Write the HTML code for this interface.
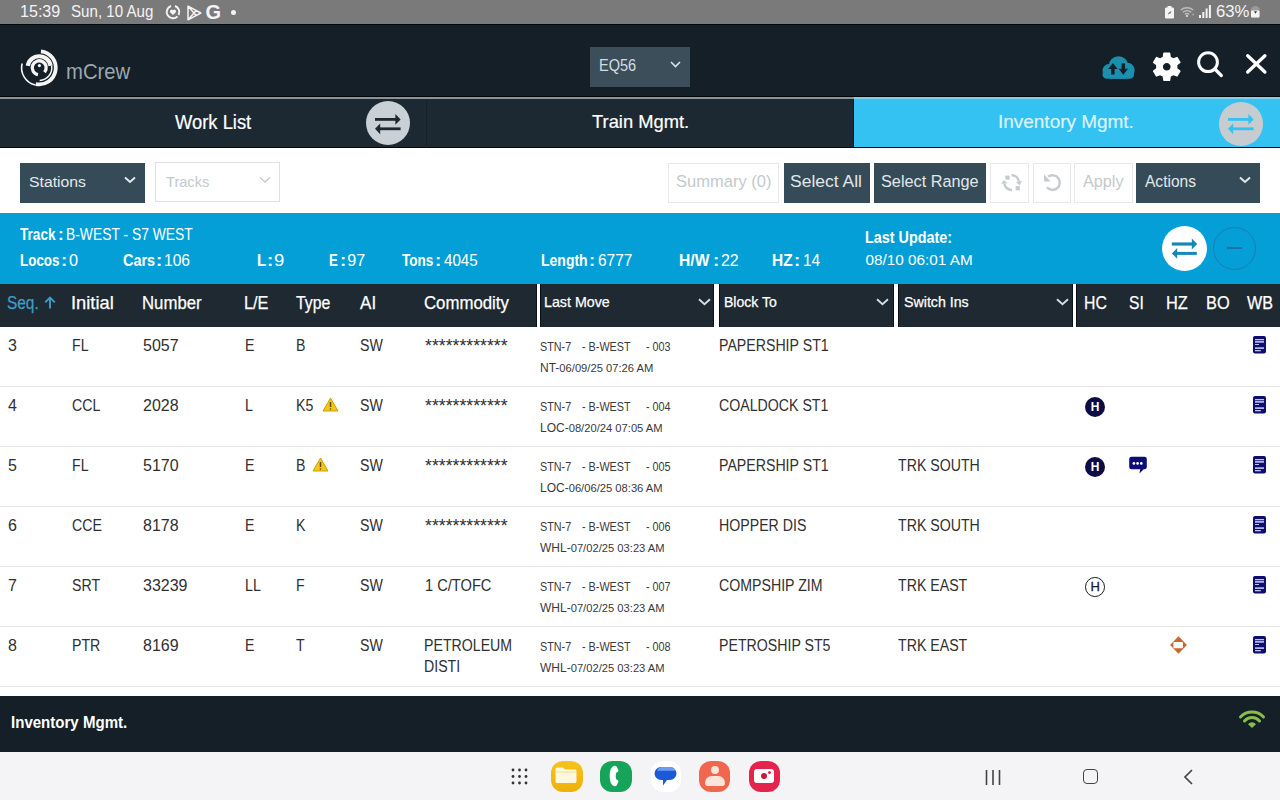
<!DOCTYPE html>
<html><head><meta charset="utf-8">
<style>
*{margin:0;padding:0;box-sizing:border-box}
html,body{width:1280px;height:800px;overflow:hidden;background:#fff;font-family:"Liberation Sans",sans-serif}
.a{position:absolute;white-space:nowrap}
svg{position:absolute;overflow:visible}
#status{left:0;top:0;width:1280px;height:24px;background:#7a7a7a;color:#f4f4f4;font-size:15.5px}
#appbar{left:0;top:24px;width:1280px;height:74px;background:#141f27;border-top:1px solid #06090c}
#tabs{left:0;top:97px;width:1280px;height:51px;background:#1d2932;border-top:2px solid #8c9297;border-bottom:1px solid #05090c;box-shadow:0 -1px #04070a}
.tab{top:0;height:48px;color:#fff;font-size:18px;line-height:48px;text-align:center;-webkit-text-stroke:0.2px currentColor}
.dd{height:40px;background:#364b58;color:#e3e9ec;font-size:15.5px;line-height:40px;padding-left:10px}
.ddw{height:40px;background:#fff;border:1px solid #dde1e4;color:#c0c6ca;font-size:15.5px;line-height:39px;padding-left:10px}
.btn{top:163px;height:40px;background:#364b58;color:#e1e7ea;font-size:15.5px;line-height:40px;text-align:center;letter-spacing:0.4px}
.btnw{top:163px;height:40px;background:#fff;border:1px solid #e6e8ea;color:#c3c9cd;font-size:15.5px;line-height:38px;text-align:center;letter-spacing:0.4px}
#band{left:0;top:213px;width:1280px;height:70.5px;background:#049fd6}
.bt{color:#fff}
.bt b{font-weight:bold}
#thead{left:0;top:283.5px;width:1280px;height:43.5px;background:#1e2931}
.th{top:-1px;color:#fff;font-size:16.5px;line-height:40px}
.sep{top:0;width:3px;height:43.5px;background:#fff;box-shadow:-1px 0 #0b1116,1px 0 #0b1116}
.row{left:0;width:1280px;height:61px;border-bottom:1.5px solid #e6e6e6}
.td{color:#303030;font-size:16px}
.lm{color:#3a3a3a;font-size:12px}
#footer{left:0;top:696px;width:1280px;height:56px;background:#151f27}
#nav{left:0;top:752px;width:1280px;height:48px;background:#f4f4f6}
</style></head><body>
<!-- status bar -->
<div id="status" class="a">
  <svg style="left:164.8px;top:4.3px" width="16" height="16" viewBox="0 0 16 16"><path d="M9.95 2.01A6.3 6.3 0 0 1 13.56 10.96 M12.53 12.38A6.3 6.3 0 1 1 6.05 2.01" fill="none" stroke="#f4f4f4" stroke-width="1.9"/><path d="M8 11l-2.7-2.6a1.6 1.6 0 0 1 2.7-2.1 1.6 1.6 0 0 1 2.7 2.1z" fill="#f4f4f4"/></svg>
  <svg style="left:186px;top:5px" width="16" height="16" viewBox="0 0 16 16"><path d="M2 1.2v13.6L14.8 8z M2 1.2L10 10.2 M2 14.8L10 5.8" fill="none" stroke="#f4f4f4" stroke-width="1.5" stroke-linejoin="round"/></svg>
  <div class="a" style="left:205.5px;top:1px;font-weight:bold;font-size:20px">G</div>
  <div class="a" style="left:231px;top:10px;width:5px;height:5px;border-radius:50%;background:#f4f4f4"></div>
  <!-- right -->
  <svg style="left:1165px;top:5.5px" width="9" height="12.5" viewBox="0 0 9 12.5"><rect x="0" y="1.5" width="9" height="11" rx="1.3" fill="#f4f4f4"/><rect x="2.5" y="0" width="4" height="2" fill="#f4f4f4"/><path d="M2.8 8.5c.5-2 2-3 3.6-3.2-.3 1.7-1.6 3-3.6 3.2z" fill="#7a7a7a"/></svg>
  <svg style="left:1180px;top:6px" width="15" height="11" viewBox="0 0 15 11"><path d="M0.8 4a9.5 9.5 0 0 1 12.4 0 M2.8 6.3a6.3 6.3 0 0 1 8.4 0 M4.9 8.4a3.2 3.2 0 0 1 4.2 0" fill="none" stroke="#bdbdbd" stroke-width="1.4"/><circle cx="7" cy="10" r="1.1" fill="#e0e0e0"/><circle cx="13.2" cy="8.4" r="1" fill="#a8a8a8"/></svg>
  <svg style="left:1199px;top:5px" width="12" height="13" viewBox="0 0 12 13"><rect x="0" y="10" width="2" height="3" fill="#f4f4f4"/><rect x="3.3" y="7" width="2" height="6" fill="#f4f4f4"/><rect x="6.6" y="3.5" width="2" height="9.5" fill="#f4f4f4"/><rect x="9.9" y="0" width="2" height="13" fill="#f4f4f4"/></svg>
  <svg style="left:1251px;top:6px" width="8.5" height="11.5" viewBox="0 0 8.5 11.5"><rect x="0" y="1.3" width="8.5" height="10.2" rx="1.2" fill="#9a9a9a"/><rect x="2.3" y="0" width="4" height="1.8" fill="#9a9a9a"/><rect x="0" y="4.5" width="8.5" height="7" rx="1" fill="#f4f4f4"/><path d="M3 5.2l1.5 2.5 1.5-2.5z" fill="#333"/></svg>
</div>
<!-- app bar -->
<div id="appbar" class="a">
  <svg style="left:20px;top:24px" width="38" height="40" viewBox="0 0 38 40"><g fill="none" stroke="#f5f5f5"><path d="M20.94 2.29A16.6 16.6 0 1 1 15.75 35.04" stroke-width="3.8"/><path d="M15.54 36.02A17.6 17.6 0 0 1 2.12 14.54" stroke-width="1.6"/><path d="M7.78 16.79A11.6 11.6 0 0 1 30.62 16.79" stroke-width="4.2"/><path d="M31.61 16.61A12.6 12.6 0 0 1 19.64 31.39" stroke-width="1.5"/><path d="M17.98 25.69A7.0 7.0 0 1 1 24.56 23.30" stroke-width="3.3"/></g><circle cx="19.4" cy="16.6" r="1.6" fill="#f5f5f5"/></svg>
  <div class="a" style="left:590px;top:22px;width:100px;height:40px;background:#3b4e5a"></div>
  <svg style="left:670px;top:36px" width="11" height="7" viewBox="0 0 11 7"><path d="M1 1l4.5 4.5L10 1" fill="none" stroke="#d8e2e7" stroke-width="1.6"/></svg>
  <!-- cloud -->
  <svg style="left:1101px;top:30.5px" width="34" height="23" viewBox="0 0 34 23"><g fill="#1b8fae"><circle cx="8" cy="14.5" r="6.5"/><circle cx="17.5" cy="10" r="9.8"/><circle cx="26.5" cy="14" r="7.2"/><rect x="5" y="12" width="24" height="10.8" rx="5"/><rect x="1.5" y="14" width="31.5" height="8.8" rx="4.4"/></g><g fill="#141f27"><path d="M10.2 18.5V13H7.2l4.7-6 4.7 6h-3V18.5z"/><path d="M20.6 7.2v5.5h-3l4.7 6 4.7-6h-3V7.2z"/></g></svg>
  <!-- gear -->
  <svg style="left:1149px;top:24px" width="35.5" height="35.5" viewBox="0 0 24 24"><path fill="#fff" d="M19.14 12.94c.04-.3.06-.61.06-.94 0-.32-.02-.64-.07-.94l2.03-1.58a.49.49 0 0 0 .12-.61l-1.92-3.32a.488.488 0 0 0-.59-.22l-2.39.96c-.5-.38-1.030-.7-1.62-.94l-.36-2.54a.484.484 0 0 0-.48-.41h-3.84c-.24 0-.43.17-.47.41l-.36 2.54c-.59.24-1.13.57-1.62.94l-2.39-.96c-.22-.08-.47 0-.59.22L2.74 8.87c-.12.21-.08.47.12.61l2.03 1.58c-.05.3-.09.63-.09.94s.02.64.07.94l-2.03 1.58a.49.49 0 0 0-.12.61l1.92 3.32c.12.22.37.29.59.22l2.39-.96c.5.38 1.03.7 1.62.94l.36 2.54c.05.24.24.41.48.41h3.84c.24 0 .44-.17.47-.41l.36-2.54c.59-.24 1.13-.56 1.62-.94l2.39.96c.22.08.47 0 .59-.22l1.920-3.32c.12-.22.07-.47-.12-.61l-2.01-1.58zM12 14.6c-1.43 0-2.6-1.17-2.6-2.6s1.17-2.6 2.6-2.6 2.6 1.17 2.6 2.6-1.17 2.6-2.6 2.6z"/></svg>
  <!-- search -->
  <svg style="left:1196px;top:26px" width="28" height="27" viewBox="0 0 28 27"><circle cx="12" cy="11.2" r="9.4" fill="none" stroke="#fff" stroke-width="3"/><path d="M18.8 18l6.5 6.5" stroke="#fff" stroke-width="3.2" stroke-linecap="round"/></svg>
  <!-- close -->
  <svg style="left:1246px;top:29px" width="21" height="20" viewBox="0 0 21 20"><path d="M1.7 1.7l17.2 16.3 M18.9 1.7L1.7 18" stroke="#fff" stroke-width="3.3" stroke-linecap="round"/></svg>
</div>
<!-- tabs -->
<div id="tabs" class="a">
  
  <div class="a" style="left:426px;top:0;width:1px;height:49px;background:#182028"></div>
  <div class="a" style="left:366px;top:2.4px;width:44px;height:44px;border-radius:50%;background:#c9d1d6"></div>
  <svg style="left:374px;top:15px" width="28" height="22" viewBox="0 0 28 22"><path d="M1 5.4h22" stroke="#1e2831" stroke-width="2.8"/><path d="M21.4 0l5.2 5.4-5.2 5.4z" fill="#1e2831"/><path d="M26.6 14.8H5" stroke="#1e2831" stroke-width="2.8"/><path d="M6.2 9.4L1 14.8l5.2 5.4z" fill="#1e2831"/></svg>
  
  <div class="a" style="left:853.5px;top:-2px;width:426.5px;height:2px;background:#84cfe9"></div>
  <div class="a" style="left:852.5px;top:0;width:1px;height:48px;background:#0c1820"></div>
  <div class="a tab" style="left:853.5px;width:426.5px;background:#33c2f1"></div>
  <div class="a" style="left:1219px;top:3px;width:43.5px;height:43.5px;border-radius:50%;background:#c6ccd0"></div>
  <svg style="left:1227px;top:15px" width="28" height="22" viewBox="0 0 28 22"><path d="M1 5.4h22" stroke="#33c2f1" stroke-width="2.8"/><path d="M21.4 0l5.2 5.4-5.2 5.4z" fill="#33c2f1"/><path d="M26.6 14.8H5" stroke="#33c2f1" stroke-width="2.8"/><path d="M6.2 9.4L1 14.8l5.2 5.4z" fill="#33c2f1"/></svg>
</div>
<!-- toolbar -->
<div class="a dd" style="left:20px;top:163px;width:125px"></div>
<svg style="left:124px;top:176px" width="12" height="8" viewBox="0 0 12 8"><path d="M1 1.5l5 4.5 5-4.5" fill="none" stroke="#e3e9ec" stroke-width="2"/></svg>
<div class="a ddw" style="left:155px;top:162px;width:125px"></div>
<svg style="left:259px;top:176px" width="12" height="8" viewBox="0 0 12 8"><path d="M1 1.5l5 4.5 5-4.5" fill="none" stroke="#c6ccd0" stroke-width="1.4"/></svg>
<div class="a btnw" style="left:668px;width:111px"></div>
<div class="a btn" style="left:784px;width:86px"></div>
<div class="a btn" style="left:874px;width:112px"></div>
<div class="a btnw" style="left:990px;width:39px"></div>
<svg style="left:1001px;top:172px" width="22" height="22" viewBox="0 0 22 22"><g fill="none" stroke="#c5cbcf" stroke-width="2.4"><path d="M10.44 3.20A7.4 7.4 0 0 1 18.03 9.57"/><path d="M10.96 18.00A7.4 7.4 0 0 1 3.37 11.63"/></g><path d="M21.24 9.12L18.53 13.14L14.82 10.02z M0.16 12.08L2.87 8.06L6.58 11.18z" fill="#c5cbcf"/><rect x="4.3" y="3.6" width="4.3" height="4" fill="#c5cbcf"/><rect x="14.6" y="14.1" width="4.3" height="4.2" fill="#c5cbcf"/></svg>
<div class="a btnw" style="left:1033px;width:38px"></div>
<svg style="left:1042px;top:172px" width="22" height="22" viewBox="0 0 22 22"><path d="M4.91 15.29A7.3 7.3 0 1 0 6.31 4.62" fill="none" stroke="#c5cbcf" stroke-width="2.5"/><path d="M2 2.6v6.8h6.6z" fill="#c5cbcf"/></svg>
<div class="a btnw" style="left:1074px;width:59px"></div>
<div class="a btn" style="left:1136px;width:124px;text-align:left;padding-left:9px"></div>
<svg style="left:1239px;top:176px" width="12" height="8" viewBox="0 0 12 8"><path d="M1 1.5l5 4.5 5-4.5" fill="none" stroke="#e3e9ec" stroke-width="2"/></svg>
<!-- band -->
<div id="band" class="a">
  <div class="a" style="left:1162px;top:13px;width:45px;height:45px;border-radius:50%;background:#fff"></div>
  <svg style="left:1170px;top:23px" width="29" height="24" viewBox="0 0 29 24"><path d="M1.8 8h21" stroke="#1787b8" stroke-width="3.2"/><path d="M21.8 2.6l5.4 5.4-5.4 5.4z" fill="#1787b8"/><path d="M26.8 17.4H6" stroke="#1787b8" stroke-width="3"/><path d="M7.2 12L1.8 17.4l5.4 5.4z" fill="#1787b8"/></svg>
  <div class="a" style="left:1213px;top:14px;width:43px;height:43px;border-radius:50%;border:1.2px solid #1a7db8"></div>
  <div class="a" style="left:1227px;top:34.2px;width:14.7px;height:2.2px;background:#1673a8"></div>
</div>
<div class="bt">
  <div class="a" style="left:20.36px;top:226.70px;font-size:15.71px;line-height:15.71px;font-weight:bold;transform:scaleX(0.866);transform-origin:0 0;">Track</div>
  <div class="a" style="left:57.87px;top:226.71px;font-size:15.70px;line-height:15.70px;font-weight:bold;transform:scaleX(1.092);transform-origin:0 0;">:</div>
  <div class="a" style="left:65.79px;top:226.70px;font-size:15.71px;line-height:15.71px;transform:scaleX(0.882);transform-origin:0 0;">B-WEST - S7 WEST</div>
  <div class="a" style="left:19.73px;top:251.84px;font-size:16.14px;line-height:16.14px;font-weight:bold;transform:scaleX(0.832);transform-origin:0 0;">Locos</div>
  <div class="a" style="left:61.04px;top:251.62px;font-size:16.40px;line-height:16.40px;font-weight:bold;transform:scaleX(1.132);transform-origin:0 0;">:</div>
  <div class="a" style="left:69.05px;top:251.84px;font-size:16.14px;line-height:16.14px;transform:scaleX(1.007);transform-origin:0 0;">0</div>
  <div class="a" style="left:122.52px;top:251.84px;font-size:16.14px;line-height:16.14px;font-weight:bold;transform:scaleX(0.895);transform-origin:0 0;">Cars</div>
  <div class="a" style="left:155.74px;top:251.62px;font-size:16.40px;line-height:16.40px;font-weight:bold;transform:scaleX(1.132);transform-origin:0 0;">:</div>
  <div class="a" style="left:164.13px;top:251.84px;font-size:16.14px;line-height:16.14px;transform:scaleX(0.967);transform-origin:0 0;">106</div>
  <div class="a" style="left:256.52px;top:251.84px;font-size:16.14px;line-height:16.14px;font-weight:bold;transform:scaleX(0.938);transform-origin:0 0;">L</div>
  <div class="a" style="left:266.64px;top:251.62px;font-size:16.40px;line-height:16.40px;font-weight:bold;transform:scaleX(1.132);transform-origin:0 0;">:</div>
  <div class="a" style="left:273.87px;top:251.84px;font-size:16.14px;line-height:16.14px;transform:scaleX(1.146);transform-origin:0 0;">9</div>
  <div class="a" style="left:328.84px;top:251.84px;font-size:16.14px;line-height:16.14px;font-weight:bold;transform:scaleX(0.822);transform-origin:0 0;">E</div>
  <div class="a" style="left:340.14px;top:251.62px;font-size:16.40px;line-height:16.40px;font-weight:bold;transform:scaleX(1.132);transform-origin:0 0;">:</div>
  <div class="a" style="left:347.37px;top:251.84px;font-size:16.14px;line-height:16.14px;">97</div>
  <div class="a" style="left:401.86px;top:251.84px;font-size:16.14px;line-height:16.14px;font-weight:bold;transform:scaleX(0.842);transform-origin:0 0;">Tons</div>
  <div class="a" style="left:435.14px;top:251.62px;font-size:16.40px;line-height:16.40px;font-weight:bold;transform:scaleX(1.132);transform-origin:0 0;">:</div>
  <div class="a" style="left:443.90px;top:251.84px;font-size:16.14px;line-height:16.14px;transform:scaleX(0.939);transform-origin:0 0;">4045</div>
  <div class="a" style="left:540.79px;top:251.84px;font-size:16.14px;line-height:16.14px;font-weight:bold;transform:scaleX(0.868);transform-origin:0 0;">Length</div>
  <div class="a" style="left:589.14px;top:251.62px;font-size:16.40px;line-height:16.40px;font-weight:bold;transform:scaleX(1.132);transform-origin:0 0;">:</div>
  <div class="a" style="left:597.63px;top:251.84px;font-size:16.14px;line-height:16.14px;transform:scaleX(0.958);transform-origin:0 0;">6777</div>
  <div class="a" style="left:679.28px;top:251.84px;font-size:16.14px;line-height:16.14px;font-weight:bold;transform:scaleX(0.969);transform-origin:0 0;">H/W</div>
  <div class="a" style="left:712.64px;top:251.62px;font-size:16.40px;line-height:16.40px;font-weight:bold;transform:scaleX(1.132);transform-origin:0 0;">:</div>
  <div class="a" style="left:720.60px;top:251.84px;font-size:16.14px;line-height:16.14px;transform:scaleX(0.987);transform-origin:0 0;">22</div>
  <div class="a" style="left:772.39px;top:251.84px;font-size:16.14px;line-height:16.14px;font-weight:bold;transform:scaleX(0.959);transform-origin:0 0;">HZ</div>
  <div class="a" style="left:794.24px;top:251.62px;font-size:16.40px;line-height:16.40px;font-weight:bold;transform:scaleX(1.132);transform-origin:0 0;">:</div>
  <div class="a" style="left:802.64px;top:251.84px;font-size:16.14px;line-height:16.14px;transform:scaleX(0.955);transform-origin:0 0;">14</div>
  <div class="a" style="left:865.26px;top:229.09px;font-size:16.43px;line-height:16.43px;font-weight:bold;transform:scaleX(0.876);transform-origin:0 0;">Last Update:</div>
  <div class="a" style="left:865.59px;top:252.36px;font-size:15.29px;line-height:15.29px;">08/10 06:01 AM</div>
</div>
<!-- table header -->
<div id="thead" class="a">
  <div class="a sep" style="left:537px;width:3px"></div>
  <div class="a sep" style="left:714.3px;width:4.4px"></div>
  <div class="a sep" style="left:893.7px;width:4.4px"></div>
  <div class="a sep" style="left:1072.8px;width:3.4px"></div>
  <svg style="left:43.5px;top:12.5px" width="12" height="13" viewBox="0 0 12 13"><path d="M6 12.5V1.5 M1.2 6.3L6 1.5l4.8 4.8" fill="none" stroke="#3f9dc9" stroke-width="1.9"/></svg>
  <svg style="left:698px;top:14px" width="13" height="8" viewBox="0 0 13 8"><path d="M1 1.2l5.5 5 5.5-5" fill="none" stroke="#d5dde1" stroke-width="1.9"/></svg>
  <svg style="left:876px;top:14px" width="13" height="8" viewBox="0 0 13 8"><path d="M1 1.2l5.5 5 5.5-5" fill="none" stroke="#d5dde1" stroke-width="1.9"/></svg>
  <svg style="left:1056px;top:14px" width="13" height="8" viewBox="0 0 13 8"><path d="M1 1.2l5.5 5 5.5-5" fill="none" stroke="#d5dde1" stroke-width="1.9"/></svg>
</div>
  <div class="a" style="left:6.71px;top:293.76px;font-size:18.00px;line-height:18.00px;transform:scaleX(0.856);transform-origin:0 0;color:#3f9dc9;-webkit-text-stroke:0.25px currentColor;">Seq.</div>
  <div class="a" style="left:70.95px;top:293.76px;font-size:18.00px;line-height:18.00px;transform:scaleX(1.019);transform-origin:0 0;color:#fff;-webkit-text-stroke:0.25px currentColor;">Initial</div>
  <div class="a" style="left:142.16px;top:293.76px;font-size:18.00px;line-height:18.00px;transform:scaleX(0.931);transform-origin:0 0;color:#fff;-webkit-text-stroke:0.25px currentColor;">Number</div>
  <div class="a" style="left:243.70px;top:293.76px;font-size:18.00px;line-height:18.00px;transform:scaleX(0.906);transform-origin:0 0;color:#fff;-webkit-text-stroke:0.25px currentColor;">L/E</div>
  <div class="a" style="left:296.28px;top:293.76px;font-size:18.00px;line-height:18.00px;transform:scaleX(0.878);transform-origin:0 0;color:#fff;-webkit-text-stroke:0.25px currentColor;">Type</div>
  <div class="a" style="left:360.30px;top:293.76px;font-size:18.00px;line-height:18.00px;transform:scaleX(0.948);transform-origin:0 0;color:#fff;-webkit-text-stroke:0.25px currentColor;">AI</div>
  <div class="a" style="left:423.66px;top:293.76px;font-size:18.00px;line-height:18.00px;transform:scaleX(0.932);transform-origin:0 0;color:#fff;-webkit-text-stroke:0.25px currentColor;">Commodity</div>
  <div class="a" style="left:1083.84px;top:293.76px;font-size:18.00px;line-height:18.00px;transform:scaleX(0.876);transform-origin:0 0;color:#fff;-webkit-text-stroke:0.25px currentColor;">HC</div>
  <div class="a" style="left:1129.20px;top:293.76px;font-size:18.00px;line-height:18.00px;transform:scaleX(0.870);transform-origin:0 0;color:#fff;-webkit-text-stroke:0.25px currentColor;">SI</div>
  <div class="a" style="left:1166.29px;top:293.76px;font-size:18.00px;line-height:18.00px;transform:scaleX(0.911);transform-origin:0 0;color:#fff;-webkit-text-stroke:0.25px currentColor;">HZ</div>
  <div class="a" style="left:1206.19px;top:293.76px;font-size:18.00px;line-height:18.00px;transform:scaleX(0.908);transform-origin:0 0;color:#fff;-webkit-text-stroke:0.25px currentColor;">BO</div>
  <div class="a" style="left:1246.82px;top:293.76px;font-size:18.00px;line-height:18.00px;transform:scaleX(0.897);transform-origin:0 0;color:#fff;-webkit-text-stroke:0.25px currentColor;">WB</div>
  <div class="a" style="left:544.46px;top:295.44px;font-size:14.71px;line-height:14.71px;transform:scaleX(0.970);transform-origin:0 0;color:#fff;-webkit-text-stroke:0.25px currentColor;">Last Move</div>
  <div class="a" style="left:723.58px;top:295.44px;font-size:14.71px;line-height:14.71px;transform:scaleX(0.954);transform-origin:0 0;color:#fff;-webkit-text-stroke:0.25px currentColor;">Block To</div>
  <div class="a" style="left:903.76px;top:295.44px;font-size:14.71px;line-height:14.71px;transform:scaleX(0.966);transform-origin:0 0;color:#fff;-webkit-text-stroke:0.25px currentColor;">Switch Ins</div>
<div class="a row" style="top:326px">
  <div class="a td" style="left:8px;top:11px;">3</div>
  <div class="a td" style="left:72px;top:11px;transform:scaleX(0.885);transform-origin:0 0;">FL</div>
  <div class="a td" style="left:143px;top:11px;">5057</div>
  <div class="a td" style="left:245px;top:11px;transform:scaleX(0.885);transform-origin:0 0;">E</div>
  <div class="a td" style="left:296px;top:11px;transform:scaleX(0.885);transform-origin:0 0;">B</div>
  <div class="a td" style="left:360px;top:11px;transform:scaleX(0.885);transform-origin:0 0;">SW</div>
  <div class="a td" style="left:425px;top:10px;font-size:17.7px">************</div>
  <div class="a lm" style="left:540px;top:14px;transform:scaleX(0.9);transform-origin:0 0">STN-7</div>
  <div class="a lm" style="left:582px;top:14px;transform:scaleX(0.9);transform-origin:0 0">- B-WEST</div>
  <div class="a lm" style="left:646px;top:14px;transform:scaleX(0.9);transform-origin:0 0">- 003</div>
  <div class="a lm" style="left:540px;top:35px">NT-<span style="font-size:11.2px">06/09/25 07:26 AM</span></div>
  <div class="a td" style="left:719px;top:11px;transform:scaleX(0.885);transform-origin:0 0;">PAPERSHIP ST1</div>
  <svg style="left:1253px;top:10px" width="14" height="18" viewBox="0 0 14 18"><rect x="0" y="0" width="13" height="17.5" rx="2" fill="#0e0e6e"/><rect x="2" y="3" width="9" height="1.3" fill="#c4c4f4"/><rect x="2" y="5.1" width="9" height="1.6" fill="#c4c4f4"/><rect x="2" y="8" width="4" height="1" fill="#c4c4f4"/><rect x="2" y="11.3" width="9" height="1.6" fill="#c4c4f4"/><rect x="2" y="14" width="5.8" height="1.3" fill="#c4c4f4"/></svg>
</div>
<div class="a row" style="top:386px">
  <div class="a td" style="left:8px;top:11px;">4</div>
  <div class="a td" style="left:72px;top:11px;transform:scaleX(0.885);transform-origin:0 0;">CCL</div>
  <div class="a td" style="left:143px;top:11px;">2028</div>
  <div class="a td" style="left:245px;top:11px;transform:scaleX(0.885);transform-origin:0 0;">L</div>
  <div class="a td" style="left:296px;top:11px;transform:scaleX(0.885);transform-origin:0 0;">K5</div>
  <svg style="left:322px;top:11px" width="17" height="15" viewBox="0 0 17 15"><path d="M8.5 1L16 14H1z" fill="#f5c518" stroke="#c9a010" stroke-width="1" stroke-linejoin="round"/><path d="M8.5 5v5" stroke="#5a4a00" stroke-width="1.5"/><circle cx="8.5" cy="12" r="0.8" fill="#5a4a00"/></svg>
  <div class="a td" style="left:360px;top:11px;transform:scaleX(0.885);transform-origin:0 0;">SW</div>
  <div class="a td" style="left:425px;top:10px;font-size:17.7px">************</div>
  <div class="a lm" style="left:540px;top:14px;transform:scaleX(0.9);transform-origin:0 0">STN-7</div>
  <div class="a lm" style="left:582px;top:14px;transform:scaleX(0.9);transform-origin:0 0">- B-WEST</div>
  <div class="a lm" style="left:646px;top:14px;transform:scaleX(0.9);transform-origin:0 0">- 004</div>
  <div class="a lm" style="left:540px;top:35px">LOC-<span style="font-size:11.2px">08/20/24 07:05 AM</span></div>
  <div class="a td" style="left:719px;top:11px;transform:scaleX(0.885);transform-origin:0 0;">COALDOCK ST1</div>
  <div class="a" style="left:1085px;top:10.7px;width:20px;height:20px;border-radius:50%;background:#0d0d45;color:#fff;font-weight:bold;font-size:12px;line-height:20px;text-align:center">H</div>
  <svg style="left:1253px;top:10px" width="14" height="18" viewBox="0 0 14 18"><rect x="0" y="0" width="13" height="17.5" rx="2" fill="#0e0e6e"/><rect x="2" y="3" width="9" height="1.3" fill="#c4c4f4"/><rect x="2" y="5.1" width="9" height="1.6" fill="#c4c4f4"/><rect x="2" y="8" width="4" height="1" fill="#c4c4f4"/><rect x="2" y="11.3" width="9" height="1.6" fill="#c4c4f4"/><rect x="2" y="14" width="5.8" height="1.3" fill="#c4c4f4"/></svg>
</div>
<div class="a row" style="top:446px">
  <div class="a td" style="left:8px;top:11px;">5</div>
  <div class="a td" style="left:72px;top:11px;transform:scaleX(0.885);transform-origin:0 0;">FL</div>
  <div class="a td" style="left:143px;top:11px;">5170</div>
  <div class="a td" style="left:245px;top:11px;transform:scaleX(0.885);transform-origin:0 0;">E</div>
  <div class="a td" style="left:296px;top:11px;transform:scaleX(0.885);transform-origin:0 0;">B</div>
  <svg style="left:312px;top:11px" width="17" height="15" viewBox="0 0 17 15"><path d="M8.5 1L16 14H1z" fill="#f5c518" stroke="#c9a010" stroke-width="1" stroke-linejoin="round"/><path d="M8.5 5v5" stroke="#5a4a00" stroke-width="1.5"/><circle cx="8.5" cy="12" r="0.8" fill="#5a4a00"/></svg>
  <div class="a td" style="left:360px;top:11px;transform:scaleX(0.885);transform-origin:0 0;">SW</div>
  <div class="a td" style="left:425px;top:10px;font-size:17.7px">************</div>
  <div class="a lm" style="left:540px;top:14px;transform:scaleX(0.9);transform-origin:0 0">STN-7</div>
  <div class="a lm" style="left:582px;top:14px;transform:scaleX(0.9);transform-origin:0 0">- B-WEST</div>
  <div class="a lm" style="left:646px;top:14px;transform:scaleX(0.9);transform-origin:0 0">- 005</div>
  <div class="a lm" style="left:540px;top:35px">LOC-<span style="font-size:11.2px">06/06/25 08:36 AM</span></div>
  <div class="a td" style="left:719px;top:11px;transform:scaleX(0.885);transform-origin:0 0;">PAPERSHIP ST1</div>
  <div class="a td" style="left:898px;top:11px;transform:scaleX(0.885);transform-origin:0 0;">TRK SOUTH</div>
  <div class="a" style="left:1085px;top:10.7px;width:20px;height:20px;border-radius:50%;background:#0d0d45;color:#fff;font-weight:bold;font-size:12px;line-height:20px;text-align:center">H</div>
  <svg style="left:1129px;top:10px" width="19" height="18" viewBox="0 0 19 18"><path d="M2.5 0.7h13a2.3 2.3 0 0 1 2.3 2.3v8a2.3 2.3 0 0 1-2.3 2.3h-0.8l-4.3 4.2 0.8-4.2H2.5A2.3 2.3 0 0 1 0.2 11V3A2.3 2.3 0 0 1 2.5 0.7z" fill="#0d0d7a"/><circle cx="4.9" cy="7.4" r="1.35" fill="#fff"/><circle cx="8.6" cy="7.4" r="1.35" fill="#fff"/><circle cx="12.3" cy="7.4" r="1.35" fill="#fff"/></svg>
  <svg style="left:1253px;top:10px" width="14" height="18" viewBox="0 0 14 18"><rect x="0" y="0" width="13" height="17.5" rx="2" fill="#0e0e6e"/><rect x="2" y="3" width="9" height="1.3" fill="#c4c4f4"/><rect x="2" y="5.1" width="9" height="1.6" fill="#c4c4f4"/><rect x="2" y="8" width="4" height="1" fill="#c4c4f4"/><rect x="2" y="11.3" width="9" height="1.6" fill="#c4c4f4"/><rect x="2" y="14" width="5.8" height="1.3" fill="#c4c4f4"/></svg>
</div>
<div class="a row" style="top:506px">
  <div class="a td" style="left:8px;top:11px;">6</div>
  <div class="a td" style="left:72px;top:11px;transform:scaleX(0.885);transform-origin:0 0;">CCE</div>
  <div class="a td" style="left:143px;top:11px;">8178</div>
  <div class="a td" style="left:245px;top:11px;transform:scaleX(0.885);transform-origin:0 0;">E</div>
  <div class="a td" style="left:296px;top:11px;transform:scaleX(0.885);transform-origin:0 0;">K</div>
  <div class="a td" style="left:360px;top:11px;transform:scaleX(0.885);transform-origin:0 0;">SW</div>
  <div class="a td" style="left:425px;top:10px;font-size:17.7px">************</div>
  <div class="a lm" style="left:540px;top:14px;transform:scaleX(0.9);transform-origin:0 0">STN-7</div>
  <div class="a lm" style="left:582px;top:14px;transform:scaleX(0.9);transform-origin:0 0">- B-WEST</div>
  <div class="a lm" style="left:646px;top:14px;transform:scaleX(0.9);transform-origin:0 0">- 006</div>
  <div class="a lm" style="left:540px;top:35px">WHL-<span style="font-size:11.2px">07/02/25 03:23 AM</span></div>
  <div class="a td" style="left:719px;top:11px;transform:scaleX(0.885);transform-origin:0 0;">HOPPER DIS</div>
  <div class="a td" style="left:898px;top:11px;transform:scaleX(0.885);transform-origin:0 0;">TRK SOUTH</div>
  <svg style="left:1253px;top:10px" width="14" height="18" viewBox="0 0 14 18"><rect x="0" y="0" width="13" height="17.5" rx="2" fill="#0e0e6e"/><rect x="2" y="3" width="9" height="1.3" fill="#c4c4f4"/><rect x="2" y="5.1" width="9" height="1.6" fill="#c4c4f4"/><rect x="2" y="8" width="4" height="1" fill="#c4c4f4"/><rect x="2" y="11.3" width="9" height="1.6" fill="#c4c4f4"/><rect x="2" y="14" width="5.8" height="1.3" fill="#c4c4f4"/></svg>
</div>
<div class="a row" style="top:566px">
  <div class="a td" style="left:8px;top:11px;">7</div>
  <div class="a td" style="left:72px;top:11px;transform:scaleX(0.885);transform-origin:0 0;">SRT</div>
  <div class="a td" style="left:143px;top:11px;">33239</div>
  <div class="a td" style="left:245px;top:11px;transform:scaleX(0.885);transform-origin:0 0;">LL</div>
  <div class="a td" style="left:296px;top:11px;transform:scaleX(0.885);transform-origin:0 0;">F</div>
  <div class="a td" style="left:360px;top:11px;transform:scaleX(0.885);transform-origin:0 0;">SW</div>
  <div class="a td" style="left:424.5px;top:10.5px;transform:scaleX(0.915);transform-origin:0 0">1 C/TOFC</div>
  <div class="a lm" style="left:540px;top:14px;transform:scaleX(0.9);transform-origin:0 0">STN-7</div>
  <div class="a lm" style="left:582px;top:14px;transform:scaleX(0.9);transform-origin:0 0">- B-WEST</div>
  <div class="a lm" style="left:646px;top:14px;transform:scaleX(0.9);transform-origin:0 0">- 007</div>
  <div class="a lm" style="left:540px;top:35px">WHL-<span style="font-size:11.2px">07/02/25 03:23 AM</span></div>
  <div class="a td" style="left:719px;top:11px;transform:scaleX(0.885);transform-origin:0 0;">COMPSHIP ZIM</div>
  <div class="a td" style="left:898px;top:11px;transform:scaleX(0.885);transform-origin:0 0;">TRK EAST</div>
  <div class="a" style="left:1085.2px;top:10.8px;width:19.8px;height:19.8px;border-radius:50%;border:1.2px solid #1a1a2e;color:#1a1a2e;font-size:13px;line-height:17.6px;-webkit-text-stroke:0.3px currentColor;text-align:center">H</div>
  <svg style="left:1253px;top:10px" width="14" height="18" viewBox="0 0 14 18"><rect x="0" y="0" width="13" height="17.5" rx="2" fill="#0e0e6e"/><rect x="2" y="3" width="9" height="1.3" fill="#c4c4f4"/><rect x="2" y="5.1" width="9" height="1.6" fill="#c4c4f4"/><rect x="2" y="8" width="4" height="1" fill="#c4c4f4"/><rect x="2" y="11.3" width="9" height="1.6" fill="#c4c4f4"/><rect x="2" y="14" width="5.8" height="1.3" fill="#c4c4f4"/></svg>
</div>
<div class="a row" style="top:626px">
  <div class="a td" style="left:8px;top:11px;">8</div>
  <div class="a td" style="left:72px;top:11px;transform:scaleX(0.885);transform-origin:0 0;">PTR</div>
  <div class="a td" style="left:143px;top:11px;">8169</div>
  <div class="a td" style="left:245px;top:11px;transform:scaleX(0.885);transform-origin:0 0;">E</div>
  <div class="a td" style="left:296px;top:11px;transform:scaleX(0.885);transform-origin:0 0;">T</div>
  <div class="a td" style="left:360px;top:11px;transform:scaleX(0.885);transform-origin:0 0;">SW</div>
  <div class="a td" style="left:424px;top:10px;line-height:20.8px;transform:scaleX(0.885);transform-origin:0 0">PETROLEUM<br>DISTI</div>
  <div class="a lm" style="left:540px;top:14px;transform:scaleX(0.9);transform-origin:0 0">STN-7</div>
  <div class="a lm" style="left:582px;top:14px;transform:scaleX(0.9);transform-origin:0 0">- B-WEST</div>
  <div class="a lm" style="left:646px;top:14px;transform:scaleX(0.9);transform-origin:0 0">- 008</div>
  <div class="a lm" style="left:540px;top:35px">WHL-<span style="font-size:11.2px">07/02/25 03:23 AM</span></div>
  <div class="a td" style="left:719px;top:11px;transform:scaleX(0.885);transform-origin:0 0;">PETROSHIP ST5</div>
  <div class="a td" style="left:898px;top:11px;transform:scaleX(0.885);transform-origin:0 0;">TRK EAST</div>
  <svg style="left:1170px;top:10px" width="17" height="18" viewBox="0 0 17 18"><path d="M8.5 0.2L16.9 9 8.5 17.8 0.1 9z" fill="#c8692a"/><rect x="3.4" y="6" width="9.5" height="6.2" rx="0.8" fill="#fff"/></svg>
  <svg style="left:1253px;top:10px" width="14" height="18" viewBox="0 0 14 18"><rect x="0" y="0" width="13" height="17.5" rx="2" fill="#0e0e6e"/><rect x="2" y="3" width="9" height="1.3" fill="#c4c4f4"/><rect x="2" y="5.1" width="9" height="1.6" fill="#c4c4f4"/><rect x="2" y="8" width="4" height="1" fill="#c4c4f4"/><rect x="2" y="11.3" width="9" height="1.6" fill="#c4c4f4"/><rect x="2" y="14" width="5.8" height="1.3" fill="#c4c4f4"/></svg>
</div>
<div id="footer" class="a">
  <svg style="left:1239px;top:14px" width="26" height="18" viewBox="0 0 26 18"><path d="M1.5 7a16 16 0 0 1 23 0" fill="none" stroke="#88be48" stroke-width="3" stroke-linecap="round"/><path d="M5.5 11a10 10 0 0 1 15 0" fill="none" stroke="#88be48" stroke-width="3" stroke-linecap="round"/><path d="M9 14.3a5 5 0 0 1 8 0L13 18z" fill="#88be48"/></svg>
</div>
<div id="nav" class="a">
  <svg style="left:511px;top:16px" width="17" height="17" viewBox="0 0 17 17"><g fill="#333">
  <circle cx="2" cy="2" r="1.4"/><circle cx="8.5" cy="2" r="1.4"/><circle cx="15" cy="2" r="1.4"/>
  <circle cx="2" cy="8.5" r="1.4"/><circle cx="8.5" cy="8.5" r="1.4"/><circle cx="15" cy="8.5" r="1.4"/>
  <circle cx="2" cy="15" r="1.4"/><circle cx="8.5" cy="15" r="1.4"/><circle cx="15" cy="15" r="1.4"/></g></svg>
  <!-- files -->
  <div class="a" style="left:551px;top:8.5px;width:31.5px;height:31.5px;border-radius:12px;background:linear-gradient(#f7c21c,#eeb10a)"></div>
  <svg style="left:555px;top:15px" width="22" height="17" viewBox="0 0 22 17"><path d="M0.5 2a1.5 1.5 0 0 1 1.5-1.5h6l2 2h10a1.5 1.5 0 0 1 1.5 1.5v10.5a1.5 1.5 0 0 1-1.5 1.5H2a1.5 1.5 0 0 1-1.5-1.5z" fill="#fff8de"/><path d="M0.5 5h21" stroke="#f1d77a" stroke-width="0.8"/></svg>
  <!-- phone -->
  <div class="a" style="left:600px;top:8.5px;width:31.5px;height:31.5px;border-radius:12px;background:#15a45a"></div>
  <svg style="left:609px;top:13px" width="14" height="22" viewBox="0 0 14 22"><path d="M5.5 0.8c-3 .8-4.8 4-4.8 10.2s1.8 9.4 4.8 10.2c1 .3 1.8-.2 2.2-1l1.6-3.2c.3-.7.1-1.4-.5-1.8l-1.6-1c-.6-1.8-.6-4.6 0-6.4l1.6-1c.6-.4.8-1.1.5-1.8L7.7 1.8c-.4-.8-1.2-1.3-2.2-1z" fill="#fff"/></svg>
  <!-- messages -->
  <div class="a" style="left:650.5px;top:8.5px;width:30.5px;height:31.5px;border-radius:12px;background:#fff"></div>
  <svg style="left:654px;top:13.5px" width="23" height="21" viewBox="0 0 23 21"><path d="M7 1h9a6.5 6.5 0 0 1 0 13h-3l-4 5.5v-5.5H7A6.5 6.5 0 0 1 7 1z" fill="#1d58d8"/><path d="M7 1h9a6.3 6.3 0 0 1 5.8 3.8H3A6.3 6.3 0 0 1 7 1z" fill="#6b9cf2"/></svg>
  <!-- contacts -->
  <div class="a" style="left:699px;top:8.5px;width:31px;height:31.5px;border-radius:12px;background:#f0674d"></div>
  <div class="a" style="left:711px;top:14px;width:8px;height:8px;border-radius:50%;background:#fde3da"></div>
  <div class="a" style="left:705px;top:24px;width:19.5px;height:10px;border-radius:10px 10px 5px 5px;background:#fde3da"></div>
  <!-- camera -->
  <div class="a" style="left:748.5px;top:8.5px;width:31px;height:31.5px;border-radius:12px;background:#e5244e"></div>
  <div class="a" style="left:754px;top:17px;width:19.5px;height:13.5px;border-radius:3px;background:#fff"></div>
  <div class="a" style="left:760.5px;top:20.5px;width:6.5px;height:6.5px;border-radius:50%;background:#c8163d"></div>
  <div class="a" style="left:768px;top:18.5px;width:3px;height:3px;border-radius:50%;background:#e5244e"></div>
  <!-- sys nav -->
  <svg style="left:985px;top:18px" width="16" height="15" viewBox="0 0 16 15"><path d="M1.5 0v15 M8 0v15 M14.5 0v15" stroke="#444" stroke-width="1.6"/></svg>
  <div class="a" style="left:1083px;top:17px;width:15px;height:15px;border-radius:4px;border:1.7px solid #444"></div>
  <svg style="left:1183px;top:17px" width="10" height="16" viewBox="0 0 10 16"><path d="M9 1L2 8l7 7" fill="none" stroke="#444" stroke-width="1.7"/></svg>
</div>
<div class="a" style="left:19.69px;top:3.77px;font-size:16.57px;line-height:16.57px;transform:scaleX(0.971);transform-origin:0 0;color:#f4f4f4;">15:39</div>
<div class="a" style="left:71.22px;top:3.77px;font-size:16.57px;line-height:16.57px;transform:scaleX(0.912);transform-origin:0 0;color:#f4f4f4;">Sun, 10 Aug</div>
<div class="a" style="left:1215.66px;top:3.76px;font-size:16.00px;line-height:16.00px;transform:scaleX(1.044);transform-origin:0 0;color:#f4f4f4;">63%</div>
<div class="a" style="left:66.08px;top:61.44px;font-size:21.57px;line-height:21.57px;transform:scaleX(0.941);transform-origin:0 0;color:#9ba7ae;">mCrew</div>
<div class="a" style="left:599.44px;top:58.22px;font-size:15.57px;line-height:15.57px;transform:scaleX(0.934);transform-origin:0 0;color:#d3dee3;">EQ56</div>
<div class="a" style="left:174.91px;top:112.95px;font-size:19.43px;line-height:19.43px;transform:scaleX(0.946);transform-origin:0 0;color:#fff;-webkit-text-stroke:0.2px currentColor;">Work List</div>
<div class="a" style="left:592.33px;top:113.48px;font-size:18.57px;line-height:18.57px;transform:scaleX(0.988);transform-origin:0 0;color:#fff;-webkit-text-stroke:0.2px currentColor;">Train Mgmt.</div>
<div class="a" style="left:998.09px;top:113.48px;font-size:18.57px;line-height:18.57px;transform:scaleX(1.021);transform-origin:0 0;color:#dcf3fc;-webkit-text-stroke:0.2px currentColor;">Inventory Mgmt.</div>
<div class="a" style="left:29.29px;top:174.00px;font-size:15.36px;line-height:15.36px;transform:scaleX(1.027);transform-origin:0 0;color:#e3e9ec;">Stations</div>
<div class="a" style="left:165.96px;top:174.00px;font-size:15.36px;line-height:15.36px;transform:scaleX(0.951);transform-origin:0 0;color:#c3c9cd;">Tracks</div>
<div class="a" style="left:675.51px;top:173.09px;font-size:16.43px;line-height:16.43px;transform:scaleX(1.006);transform-origin:0 0;color:#c3c9cd;">Summary (0)</div>
<div class="a" style="left:790.46px;top:173.09px;font-size:16.43px;line-height:16.43px;transform:scaleX(1.065);transform-origin:0 0;color:#e1e7ea;">Select All</div>
<div class="a" style="left:880.52px;top:173.09px;font-size:16.43px;line-height:16.43px;transform:scaleX(0.990);transform-origin:0 0;color:#e1e7ea;">Select Range</div>
<div class="a" style="left:1083.25px;top:173.09px;font-size:16.43px;line-height:16.43px;transform:scaleX(0.986);transform-origin:0 0;color:#c3c9cd;">Apply</div>
<div class="a" style="left:1145.00px;top:173.09px;font-size:16.43px;line-height:16.43px;transform:scaleX(0.947);transform-origin:0 0;color:#e1e7ea;">Actions</div>
<div class="a" style="left:11.02px;top:713.90px;font-size:16.07px;line-height:16.07px;font-weight:bold;transform:scaleX(0.937);transform-origin:0 0;color:#fff;">Inventory Mgmt.</div>
</body></html>
